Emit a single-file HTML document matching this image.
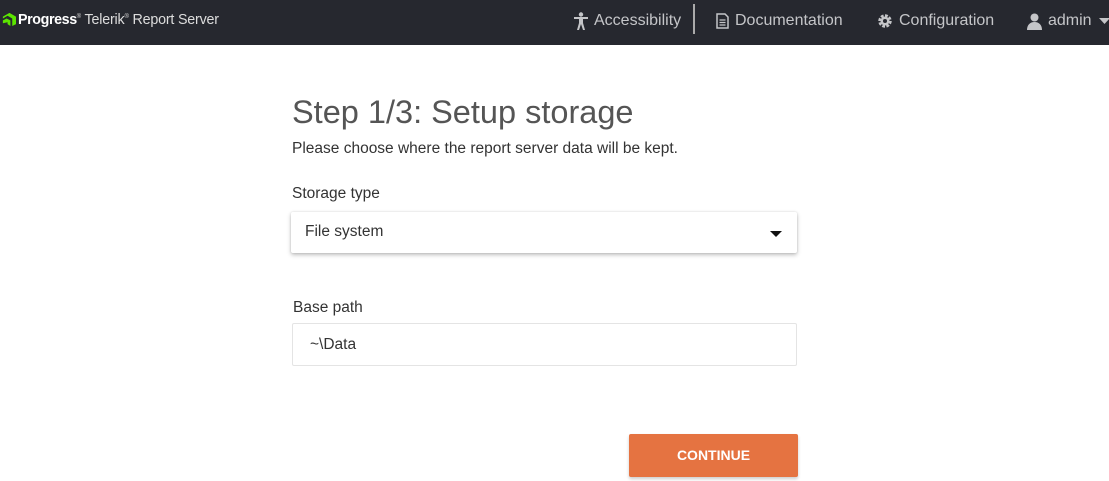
<!DOCTYPE html>
<html><head><meta charset="utf-8"><style>
*{margin:0;padding:0;box-sizing:border-box}
body{width:1109px;height:481px;overflow:hidden;background:#fff;font-family:"Liberation Sans",Arial,sans-serif;position:relative}
.hdr{position:absolute;left:0;top:0;width:1109px;height:45px;background:#26282f;color:#c8c9cc}
.abs{position:absolute}
.nav{font-size:16px;color:#c4c5c8;top:12px;display:flex;align-items:center;gap:6px}
h1{position:absolute;left:292px;top:94px;font-size:32.5px;font-weight:normal;color:#555}
.t{position:absolute;font-size:15.5px;color:#333}
</style></head><body>
<div class="hdr">
 <svg class="abs" style="left:1px;top:11px" width="15" height="15" viewBox="0 0 16 16"><path d="M2 6 L9 2 L16 6 L16 14 L12 16 L12 8 L7 5 L2 8Z" fill="#5ce500"/><path d="M2 10 L6 8 L10 10 L10 16 L7 14 L7 12 L2 13Z" fill="#5ce500"/></svg>
 <div class="abs" style="left:18px;top:12px;font-size:14.3px;color:#fff;font-weight:bold;letter-spacing:-0.4px">Progress<span style="font-weight:normal;color:#ddd;letter-spacing:-0.2px"><sup style="font-size:6px">®</sup> Telerik<sup style="font-size:6px">®</sup> Report Server</span></div>
 <div class="abs nav" style="left:574px"><svg width="14" height="18" viewBox="0 0 14 18" fill="#c4c5c8"><circle cx="7" cy="2.5" r="2.2"/><path d="M0 5h14v2H9v4l2 7H9l-2-6-2 6H3l2-7V7H0z"/></svg>Accessibility</div>
 <div class="abs" style="left:693px;top:4px;width:2px;height:30px;background:#aaa"></div>
 <div class="abs nav" style="left:716px"><svg width="13" height="16" viewBox="0 0 13 16"><path d="M1 1h8l3 3v11H1z" fill="none" stroke="#c4c5c8" stroke-width="1.5"/><path d="M3.5 7h6M3.5 9.5h6M3.5 12h6" stroke="#c4c5c8" stroke-width="1.3"/></svg>Documentation</div>
 <div class="abs nav" style="left:877px"><svg width="16" height="16" viewBox="0 0 16 16"><circle cx="8" cy="8" r="5" fill="none" stroke="#c4c5c8" stroke-width="3.5" stroke-dasharray="2.6 1.3"/><circle cx="8" cy="8" r="4.5" fill="#c4c5c8"/><circle cx="8" cy="8" r="2" fill="#26282f"/></svg>Configuration</div>
 <div class="abs nav" style="left:1027px"><svg width="15" height="17" viewBox="0 0 15 17" fill="#c4c5c8"><circle cx="7.5" cy="4.5" r="4"/><path d="M0 17c0-5 3-8 7.5-8S15 12 15 17z"/></svg>admin<svg width="11" height="6" viewBox="0 0 11 6" style="margin-left:1px"><path d="M0 0h11L5.5 6z" fill="#c4c5c8"/></svg></div>
</div>
<h1>Step 1/3: Setup storage</h1>
<div class="t" style="left:292px;top:140px;font-size:15.5px">Please choose where the report server data will be kept.</div>
<div class="t" style="left:292px;top:185px">Storage type</div>
<div class="abs" style="left:291px;top:212px;width:506px;height:41px;background:#fff;border-radius:2px;box-shadow:0 2px 4px rgba(0,0,0,.25),0 0 2px rgba(0,0,0,.12)"></div>
<div class="t" style="left:305px;top:223px">File system</div>
<div class="abs" style="left:770px;top:231px;width:0;height:0;border-left:6px solid transparent;border-right:6px solid transparent;border-top:6px solid #111"></div>
<div class="t" style="left:293px;top:299px">Base path</div>
<div class="abs" style="left:292px;top:323px;width:505px;height:43px;border:1px solid #e4e4e4;border-radius:2px"></div>
<div class="t" style="left:310px;top:336px">~\Data</div>
<div class="abs" style="left:629px;top:434px;width:169px;height:43px;background:#e57341;border-radius:2px;box-shadow:0 2px 3px rgba(0,0,0,.2);color:#fff;font-weight:bold;font-size:14px;text-align:center;line-height:43px">CONTINUE</div>
</body></html>
